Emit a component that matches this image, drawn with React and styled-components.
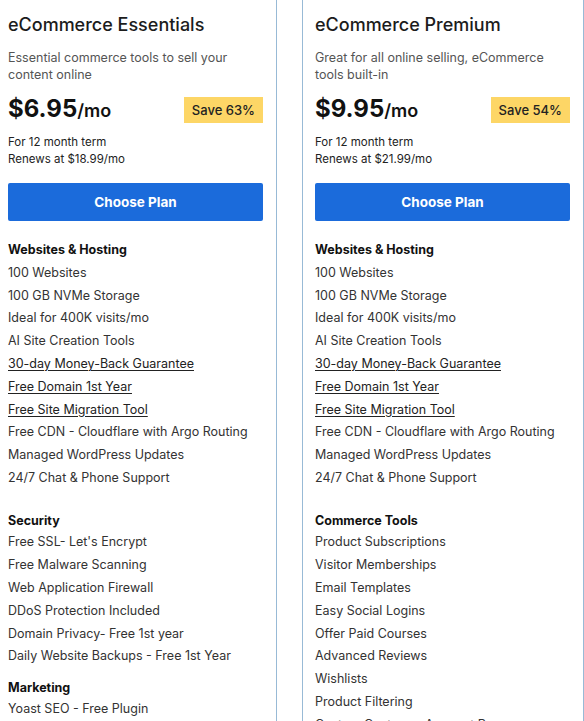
import styled, { createGlobalStyle } from "styled-components";

const GlobalStyle = createGlobalStyle`
  body {
    margin: 0;
    background: #fff;
    font-family: Inter, "Open Sans", sans-serif;
    color: #222;
    overflow: hidden;
  }
`;

const Row = styled.div`
  display: flex;
  gap: 25px;
  margin: -1px 0 0 -5px;
`;

const Card = styled.div`
  box-sizing: border-box;
  width: 282px;
  flex: none;
  border: 1px solid #98bad6;
  padding: 13px 13px 40px 12px;
  display: flex;
  flex-direction: column;
`;

const Title = styled.h2`
  margin: 0;
  font-size: 18px;
  line-height: 24px;
  font-weight: 500;
  color: #1c1c1c;
`;

const Desc = styled.p`
  margin: 11.5px 0 0;
  font-size: 12.5px;
  line-height: 17px;
  color: #555;
`;

const PriceRow = styled.div`
  margin-top: 14px;
  height: 26px;
  display: flex;
  align-items: center;
  justify-content: space-between;
`;

const Price = styled.div`
  font-size: 24px;
  line-height: 26px;
  font-weight: 700;
  color: #111;
  span {
    font-size: 18px;
    font-weight: 600;
  }
`;

const Badge = styled.div`
  height: 26px;
  padding: 0 8px;
  display: flex;
  align-items: center;
  background: #fdd666;
  font-size: 13px;
  font-weight: 500;
  color: #222;
`;

const Terms = styled.div`
  margin-top: 11.5px;
  font-size: 11.5px;
  line-height: 17px;
  color: #222;
`;

const Button = styled.button`
  margin-top: 14.5px;
  height: 38px;
  border: none;
  border-radius: 2px;
  background: #1b6bdb;
  color: #fff;
  font-family: inherit;
  font-size: 13.5px;
  font-weight: 700;
  cursor: pointer;
`;

const Group = styled.ul`
  list-style: none;
  margin: ${(p) => p.$gap}px 0 0;
  padding: 0;
  font-size: 12.5px;
  line-height: 22.8px;
`;

const Heading = styled.li`
  font-weight: 700;
  color: #111;
  margin-bottom: ${(p) => p.$tight ? -1.5 : 0}px;
`;

const Item = styled.li`
  color: #333;
  white-space: nowrap;
  text-decoration: ${(p) => (p.$link ? "underline" : "none")};
  text-underline-offset: 2px;
  ${(p) => p.$link && "color: #222;"}
`;

const hosting = [
  ["100 Websites"],
  ["100 GB NVMe Storage"],
  ["Ideal for 400K visits/mo"],
  ["AI Site Creation Tools"],
  ["30-day Money-Back Guarantee", true],
  ["Free Domain 1st Year", true],
  ["Free Site Migration Tool", true],
  ["Free CDN - Cloudflare with Argo Routing"],
  ["Managed WordPress Updates"],
  ["24/7 Chat & Phone Support"],
];

const plans = [
  {
    title: "eCommerce Essentials",
    desc: "Essential commerce tools to sell your content online",
    price: "$6.95",
    save: "Save 63%",
    renew: "$18.99/mo",
    groups: [
      { title: "Websites & Hosting", gap: 18.6, items: hosting },
      {
        title: "Security",
        gap: 20.2,
        tight: true,
        items: [
          ["Free SSL- Let's Encrypt"],
          ["Free Malware Scanning"],
          ["Web Application Firewall"],
          ["DDoS Protection Included"],
          ["Domain Privacy- Free 1st year"],
          ["Daily Website Backups - Free 1st Year"],
        ],
      },
      { title: "Marketing", gap: 8.5, tight: true, items: [["Yoast SEO - Free Plugin"]] },
    ],
  },
  {
    title: "eCommerce Premium",
    desc: "Great for all online selling, eCommerce tools built-in",
    price: "$9.95",
    save: "Save 54%",
    renew: "$21.99/mo",
    groups: [
      { title: "Websites & Hosting", gap: 18.6, items: hosting },
      {
        title: "Commerce Tools",
        gap: 20.2,
        tight: true,
        items: [
          ["Product Subscriptions"],
          ["Visitor Memberships"],
          ["Email Templates"],
          ["Easy Social Logins"],
          ["Offer Paid Courses"],
          ["Advanced Reviews"],
          ["Wishlists"],
          ["Product Filtering"],
          ["Custom Customer Account Pages"],
        ],
      },
    ],
  },
];

const PlanCard = ({ plan }) => (
  <Card>
    <Title>{plan.title}</Title>
    <Desc>{plan.desc}</Desc>
    <PriceRow>
      <Price>
        {plan.price}
        <span>/mo</span>
      </Price>
      <Badge>{plan.save}</Badge>
    </PriceRow>
    <Terms>
      For 12 month term
      <br />
      Renews at {plan.renew}
    </Terms>
    <Button>Choose Plan</Button>
    {plan.groups.map((g) => (
      <Group key={g.title} $gap={g.gap}>
        <Heading $tight={g.tight}>{g.title}</Heading>
        {g.items.map(([text, link]) => (
          <Item key={text} $link={link}>
            {text}
          </Item>
        ))}
      </Group>
    ))}
  </Card>
);

export default function App() {
  return (
    <>
      <GlobalStyle />
      <Row>
        {plans.map((p) => (
          <PlanCard key={p.title} plan={p} />
        ))}
      </Row>
    </>
  );
}
